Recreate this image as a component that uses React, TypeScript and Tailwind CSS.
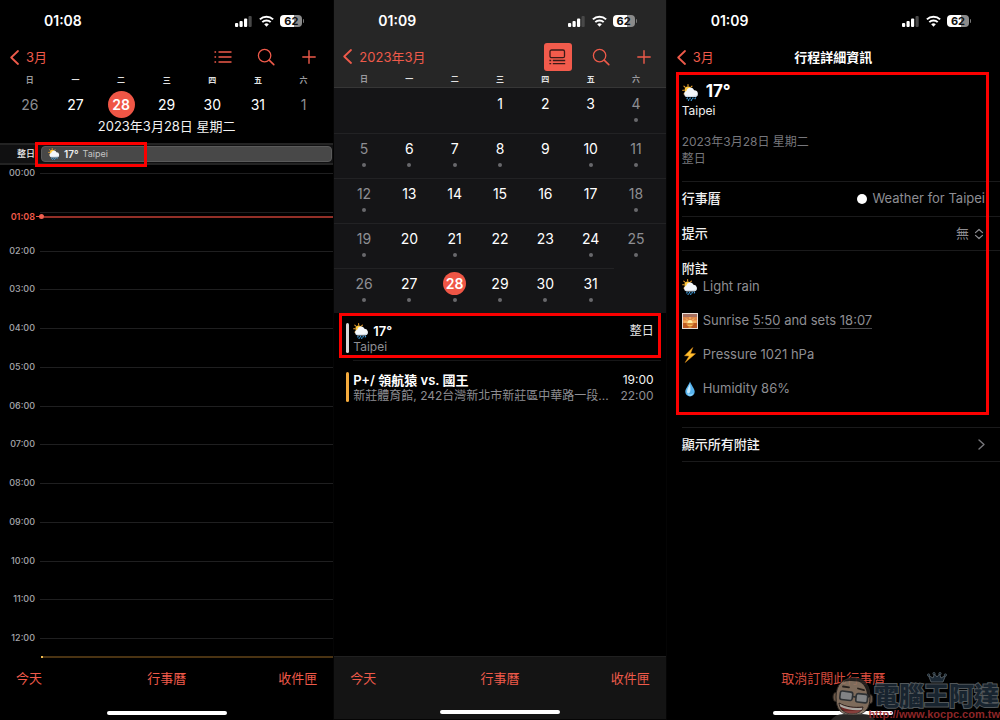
import type { ReactNode } from "react";

const WEEKDAYS = ["日", "一", "二", "三", "四", "五", "六"];
const HOURS = ["00:00", "", "02:00", "03:00", "04:00", "05:00", "06:00", "07:00", "08:00", "09:00", "10:00", "11:00", "12:00"];
const BUSY = [4, 5, 6, 7, 8, 10, 11, 12, 18, 19, 21, 24, 25, 26, 27, 28, 29, 30, 31];

function StatusBar({ time }: { time: string }) {
  return (
    <div className="flex h-[42px] shrink-0 items-center justify-between pr-[29px] pl-11">
      <span className="text-[14px] leading-5 font-semibold text-white">{time}</span>
      <div className="flex items-center gap-[6px]">
        <svg width="18" height="12" viewBox="0 0 18 12" aria-label="訊號">
          <rect x="0" y="8" width="3.2" height="4" rx="1" fill="#fff" />
          <rect x="4.5" y="6" width="3.2" height="6" rx="1" fill="#fff" />
          <rect x="9" y="3.5" width="3.2" height="8.5" rx="1" fill="#fff" />
          <rect x="13.5" y="1" width="3.2" height="11" rx="1" fill="#484848" />
        </svg>
        <svg width="15" height="12" viewBox="0 0 15 12" fill="none" stroke="#fff" strokeWidth="2" aria-label="Wi-Fi">
          <path d="M0.9 4.4a9.4 9.4 0 0 1 13.2 0" />
          <path d="M3.3 7.1a6 6 0 0 1 8.4 0" />
          <path d="M7.5 11.7 5.2 9.3a3.3 3.3 0 0 1 4.6 0z" fill="#fff" stroke="none" />
        </svg>
        <div className="flex items-center gap-px">
          <span className="flex h-3 w-[22px] items-center justify-center rounded-[4px] bg-linear-to-r from-white from-62% to-[#8b8b8b] to-62% text-[11px] leading-3 font-bold text-[#111]">
            62
          </span>
          <span className="h-1 w-px rounded-r bg-[#777]" />
        </div>
      </div>
    </div>
  );
}

function BackLink({ label }: { label: string }) {
  return (
    <a href="#back" className="flex items-center gap-[7px] text-[13px] leading-5 text-[#ee5a4a]">
      <svg width="9" height="15" viewBox="0 0 9 15" fill="none" stroke="currentColor" strokeWidth="1.8" strokeLinecap="round" strokeLinejoin="round">
        <path d="M8 1 1.2 7.5 8 14" />
      </svg>
      {label}
    </a>
  );
}

function IconButton({ label, active, children }: { label: string; active?: boolean; children: ReactNode }) {
  return (
    <button
      aria-label={label}
      className={
        active
          ? "flex size-7 items-center justify-center rounded-[3px] bg-[#f25b4c] text-[#3a1a17]"
          : "flex size-7 items-center justify-center text-[#ee5a4a]"
      }
    >
      {children}
    </button>
  );
}

function SearchAndAdd() {
  return (
    <>
      <IconButton label="搜尋">
        <svg width="18" height="18" viewBox="0 0 18 18" fill="none" stroke="currentColor" strokeWidth="1.3" strokeLinecap="round">
          <circle cx="7.6" cy="7.6" r="6.2" />
          <path d="m12.2 12.2 4.6 4.4" strokeWidth="1.6" />
        </svg>
      </IconButton>
      <IconButton label="加入">
        <svg width="14" height="14" viewBox="0 0 14 14" fill="none" stroke="currentColor" strokeWidth="1.4" strokeLinecap="round">
          <path d="M7 .8v12.4M.8 7h12.4" />
        </svg>
      </IconButton>
    </>
  );
}

function Weekdays() {
  return (
    <div className="grid h-4 grid-cols-7 px-[7px] text-center text-[8px] leading-4 font-bold">
      {WEEKDAYS.map((d, i) => (
        <span key={d} className={i % 6 === 0 ? "text-[#9a9a9e]" : "text-[#e2e2e2]"}>
          {d}
        </span>
      ))}
    </div>
  );
}

function WeatherIcon({ size }: { size: number }) {
  return (
    <svg width={size} height={size} viewBox="0 0 17 17" className="shrink-0" aria-hidden="true">
      <g stroke="#f2a32c" strokeWidth="1.1" strokeLinecap="round">
        <path d="M6 .6v1.5M1.9 2.2l1.1 1M.7 6.2h1.4M10 2.2l-1 1M2 9.8l.8-.7" />
      </g>
      <circle cx="6" cy="6" r="3.4" fill="#ffc83d" />
      <path d="M4.9 13a3 3 0 0 1-.5-5.900A4.100 4.100 0 0 1 12.200 6.200a3.500 3.500 0 0 1 1.300 6.800z" fill="#f4f7fa" />
      <path d="M4.900 13a3 3 0 0 1-2.100-1.400c2.400.600 9.100.600 13-.6a3.500 3.500 0 0 1-2.300 2z" fill="#cfdae5" />
      <g stroke="#3f9ddd" strokeWidth="1.200" strokeLinecap="round">
        <path d="m5.400 14-.4.800M8.200 14l-.4.800M11 14l-.4.800M13.400 14l-.4.800M6.700 15.700l-.3.700M9.500 15.700l-.3.700" />
      </g>
    </svg>
  );
}

function SunriseIcon() {
  return (
    <svg width="16" height="16" viewBox="0 0 16 16" className="shrink-0" aria-hidden="true">
      <rect width="16" height="16" fill="#e9ddd5" />
      <rect x="1" y="1" width="14" height="14" fill="#ee9a52" />
      <rect x="1" y="1" width="14" height="3" fill="#a8705f" />
      <rect x="1" y="4" width="14" height="3" fill="#dd8548" />
      <path d="M8 4v2M4 5.500l1.500 1.500M12 5.500l-1.500 1.500M2 9h3M11 9h3" stroke="#ffd873" strokeWidth=".8" />
      <circle cx="8" cy="9.500" r="2.600" fill="#fff0a6" />
      <rect x="1" y="10" width="14" height="5" fill="#bd5b23" />
      <path d="M4.500 11h7M5.500 12.500h5M6.500 14h3" stroke="#ffc65a" strokeWidth=".9" />
    </svg>
  );
}

function BoltIcon() {
  return (
    <svg width="16" height="16" viewBox="0 0 16 16" className="shrink-0" aria-hidden="true">
      <path d="M10.800.5 2.500 8.800l4.600.2L3.200 15.500l10.300-8.800-4.900-.3z" fill="#ffc02e" stroke="#e58e1c" strokeWidth=".5" />
    </svg>
  );
}

function DropIcon() {
  return (
    <svg width="16" height="16" viewBox="0 0 16 16" className="shrink-0" aria-hidden="true">
      <path d="M8 .4C7 3.800 3.300 7.300 3.300 10.800a4.700 4.700 0 0 0 9.400 0C12.700 7.300 9 3.800 8 .4z" fill="#56b3ee" />
      <path d="M7.900 3C7 5.800 5 8 5 10.600c0 1 .6 1.800 1.400 1.800 2.100 0 2.600-4 1.500-9.400z" fill="#c4ebff" />
      <path d="M5.200 12.500c1.500 1.500 4.500 1.500 6-.5-.4 3-4.700 4-6 .5z" fill="#9edcff" />
    </svg>
  );
}

function TabBar() {
  return (
    <nav className="grid grid-cols-3 px-4 pt-[11px] text-[13px] leading-5 text-[#ee5a4a]">
      <button className="text-left">今天</button>
      <button className="text-center">行事曆</button>
      <button className="text-right">收件匣</button>
    </nav>
  );
}

function HomeIndicator() {
  return <div className="mx-auto mt-auto mb-[5px] h-1 w-[120px] rounded-full bg-white" />;
}

function Annotation() {
  return <div className="pointer-events-none absolute inset-0 border-[3px] border-[#fb0000]" />;
}

function DayView() {
  return (
    <section className="flex min-w-0 flex-col bg-black">
      <StatusBar time="01:08" />
      <header className="flex h-[30px] items-center justify-between px-[10px]">
        <BackLink label="3月" />
        <div className="flex gap-[15px]">
          <IconButton label="列表">
            <svg width="18" height="14" viewBox="0 0 18 14" fill="none" stroke="currentColor" strokeWidth="1.300">
              <path d="M4.500 2h13M4.500 7h13M4.500 12h13M.5 2h1.600M.5 7h1.600M.5 12h1.600" />
            </svg>
          </IconButton>
          <SearchAndAdd />
        </div>
      </header>
      <Weekdays />
      <div className="grid h-8 grid-cols-7 items-center px-[7px] text-center text-[14px] text-white">
        {[26, 27, 28, 29, 30, 31, 1].map((d, i) => (
          <button
            key={d}
            className={
              d === 28
                ? "mx-auto size-[27px] rounded-full bg-[#ef5646] font-semibold"
                : i % 6 === 0
                  ? "text-[#8e8e93]"
                  : "font-normal"
            }
          >
            {d}
          </button>
        ))}
      </div>
      <h1 className="h-[23px] text-center text-[13px] leading-3 text-[#f2f2f2]">2023年3月28日 星期二</h1>
      <div className="flex h-[22px] items-center gap-[6px] border-y-2 border-[#232323] bg-[#101011] pr-px">
        <span className="w-[35px] text-right text-[9px] font-medium text-[#e8e8e8]">整日</span>
        <div className="relative flex h-4 min-w-0 flex-1 items-center gap-1 rounded-[4px] border border-[#5a5a5a] bg-[#484848] pl-[6px]">
          <WeatherIcon size={12} />
          <span className="text-[10px] font-semibold text-[#ededed]">17°</span>
          <span className="text-[9px] text-[#c4c4c4]">Taipei</span>
          <div className="pointer-events-none absolute -top-[5px] -left-[7px] h-[25px] w-[112px] border-[3px] border-[#fb0000]" />
        </div>
      </div>
      <ol className="flex flex-1 flex-col text-[9px] leading-4 text-[#a5a5aa]">
        {HOURS.map((h, i) => (
          <li key={i} className={i === 12 ? "relative flex h-[26px] items-start gap-[5px]" : "relative flex flex-1 items-start gap-[5px]"}>
            <span className="h-4 w-[35px] text-right font-medium">{h}</span>
            <span className="mt-2 h-px flex-1 bg-[#1f1f20]" />
            {i === 1 && (
              <div className="absolute inset-x-0 top-[5px] flex items-center">
                <span className="w-[35px] text-right text-[9px] font-semibold text-[#ee5a4a]">01:08</span>
                <span className="ml-px h-px w-[3px] bg-[#ee5a4a]" />
                <span className="size-[5px] rounded-full bg-[#f0604f]" />
                <span className="h-[2px] flex-1 bg-[#922f27]" />
              </div>
            )}
          </li>
        ))}
      </ol>
      <footer className="flex h-16 flex-col">
        <div className="flex h-px items-center pl-[41px]">
          <span className="size-[2px] bg-[#f4bc4e]" />
          <span className="h-[2px] flex-1 bg-[#4a3312]" />
        </div>
        <TabBar />
        <HomeIndicator />
      </footer>
    </section>
  );
}

function MonthView() {
  const cells = [null, null, null, ...Array.from({ length: 31 }, (_, i) => i + 1)];
  const weeks = [0, 1, 2, 3, 4].map((w) => cells.slice(w * 7, w * 7 + 7));
  return (
    <section className="flex min-w-0 flex-col border border-[#050505] bg-black">
      <div className="-mt-px flex h-[88px] flex-col border-b border-[#363636] bg-[#262626]">
        <StatusBar time="01:09" />
        <header className="flex h-[30px] items-center justify-between pr-2 pl-[9px]">
          <BackLink label="2023年3月" />
          <div className="flex gap-[15px]">
            <IconButton label="顯示活動" active>
              <svg width="17" height="16" viewBox="0 0 17 16" fill="none" stroke="currentColor" strokeWidth="1.300">
                <rect x="1" y="1" width="14.500" height="7.700" rx="1.500" />
                <path d="M3.800 11.500h12.400M3.800 14.700h12.400M.4 11.500h1.800M.4 14.700h1.800" />
              </svg>
            </IconButton>
            <SearchAndAdd />
          </div>
        </header>
        <Weekdays />
      </div>
      <div className="bg-[#151517]">
        {weeks.map((week, w) => (
          <div key={w} className="relative grid h-[45px] grid-cols-7 px-[7px]">
            {w > 0 && <div className={w === 4 ? "absolute top-0 right-[52px] left-0 h-px bg-[#222224]" : "absolute inset-x-0 top-0 h-px bg-[#222224]"} />}
            {week.map((d, i) =>
              d ? (
                <button key={i} className="flex flex-col items-center pt-1 text-[14px] text-white">
                  <span
                    className={
                      d === 28
                        ? "size-[23px] rounded-full bg-[#ef5646] leading-[23px] font-semibold"
                        : i % 6 === 0
                          ? "h-[23px] leading-[23px] text-[#8e8e93]"
                          : "h-[23px] leading-[23px] font-normal"
                    }
                  >
                    {d}
                  </span>
                  {BUSY.includes(d) && <span className="mt-[3px] size-1 rounded-full bg-[#68686c]" />}
                </button>
              ) : (
                <span key={i} />
              ),
            )}
          </div>
        ))}
      </div>
      <ul className="px-[5px]">
        <li className="relative flex h-[45px] gap-1 px-[7px] pt-[10px]">
          <span className="h-[30px] w-[3px] rounded-full bg-[#d9d9d9]" />
          <div className="min-w-0 flex-1">
            <div className="flex h-4 items-center gap-1 text-[13px] leading-4 font-semibold text-white">
              <WeatherIcon size={16} />
              17°
            </div>
            <div className="text-[12px] leading-4 text-[#8e8e93]">Taipei</div>
          </div>
          <span className="text-[12px] leading-4 text-[#e8e8e8]">整日</span>
          <Annotation />
        </li>
        <li className="mt-[2px] ml-[14px] h-px bg-[#161617]" />
        <li className="flex gap-1 px-[7px] pt-[11px]">
          <span className="h-[30px] w-[3px] rounded-full bg-[#f5ab3d]" />
          <div className="min-w-0 flex-1">
            <div className="text-[13px] leading-4 font-semibold text-white">P+/ 領航猿 vs. 國王</div>
            <div className="text-[12px] leading-4 whitespace-nowrap text-[#8e8e93]">新莊體育館, 242台灣新北市新莊區中華路一段...</div>
          </div>
          <div className="text-right text-[12px] leading-4">
            <div className="text-[#f2f2f2]">19:00</div>
            <div className="text-[#8e8e93]">22:00</div>
          </div>
        </li>
      </ul>
      <footer className="mt-auto flex h-[63px] flex-col border-t border-[#202020] bg-[#141414]">
        <TabBar />
        <HomeIndicator />
      </footer>
    </section>
  );
}

function Note({ icon, children }: { icon: ReactNode; children: ReactNode }) {
  return (
    <li className="flex h-[18px] items-center gap-[5px]">
      {icon}
      <span>{children}</span>
    </li>
  );
}

function Watermark() {
  return (
    <div className="pointer-events-none absolute right-0 bottom-0 flex items-end opacity-90">
      <svg width="46" height="44" viewBox="0 0 46 44" className="-mr-[9px]" aria-hidden="true">
        <path d="M0 44c3-4 7-6 12-6h20c6 0 10 3 12 6z" fill="#2c2b2a" />
        <ellipse cx="5" cy="21" rx="3" ry="4.500" fill="#75604e" stroke="#2b2622" />
        <ellipse cx="39" cy="23" rx="2.800" ry="4.500" fill="#75604e" stroke="#2b2622" />
        <path d="M5 21C5 8 12 2 23 2s16 8 16 19c0 12-5 18-17 18S5 34 5 21z" fill="#8c7765" stroke="#2b2622" />
        <path d="M12 6c3-3 7-4.500 12-4.500C34 2 39 9 39 21l-2.500 1C36 13 33 7 27 5.500 21 4.500 16 5 12 6z" fill="#24211f" />
        <g fill="#8f9294" stroke="#33373a" strokeWidth="1.600">
          <rect x="9" y="15.500" width="12.500" height="8.500" rx="2" transform="rotate(7 15 20)" />
          <rect x="25" y="18" width="11.500" height="8.500" rx="2" transform="rotate(6 31 22)" />
        </g>
        <path d="m21.500 20.500 3.500.6" stroke="#33373a" strokeWidth="1.600" />
        <path d="m12 10.500 6 .8M27 12.500l6 1.700" stroke="#2b2420" strokeWidth="1.800" strokeLinecap="round" />
        <path d="M8 27c7 4 15 5 24 4-1 5-6 7-11 7-7 0-12-4-13-11z" fill="#7a2b28" stroke="#2b2622" />
        <path d="M8.500 27.800c7 3.800 14.500 4.700 23 3.900l-1 2.300c-8 .8-15-.4-21-3.200z" fill="#bdb9b3" />
      </svg>
      <div className="flex flex-col items-end">
        <svg width="20" height="11" viewBox="0 0 20 11" className="mr-[53px]" aria-hidden="true">
          <path d="M4 10 1.500 3.500 6 6l1.500-4L10 5l2.500-3L14 6l4.500-2.500L16 10z" fill="#1d2c39" stroke="#69757c" strokeWidth=".8" />
          <g fill="#1d2c39" stroke="#69757c" strokeWidth=".6">
            <circle cx="1.600" cy="3" r="1.200" />
            <circle cx="7" cy="1.600" r="1.200" />
            <circle cx="13" cy="1.600" r="1.200" />
            <circle cx="18.400" cy="3" r="1.200" />
          </g>
        </svg>
        <span className="mr-px text-[25px] leading-[26px] font-black text-[#1b2935] [-webkit-text-stroke:2px_#5c6265] [paint-order:stroke]">電腦王阿達</span>
        <span className="font-['Liberation_Sans',sans-serif] text-[11px] leading-[11px] font-bold text-[#9c2b2d]">http://www.kocpc.com.tw</span>
      </div>
    </div>
  );
}

function EventDetail() {
  return (
    <section className="relative flex min-w-0 flex-col bg-black">
      <StatusBar time="01:09" />
      <header className="grid h-[30px] grid-cols-[1fr_auto_1fr] items-center px-[10px]">
        <BackLink label="3月" />
        <h2 className="text-[13px] leading-5 font-semibold text-white">行程詳細資訊</h2>
      </header>
      <div className="relative flex h-[343px] flex-col pl-[15px] text-[13px]">
        <h3 className="mt-2 flex h-6 items-center gap-[7px] text-[17px] font-bold text-white">
          <WeatherIcon size={17} />
          17°
        </h3>
        <p className="text-[12px] leading-[14px] text-[#f0f0f0]">Taipei</p>
        <div className="mt-[15px] h-12 text-[12px] leading-[17px] text-[#77777c]">
          <p>2023年3月28日 星期二</p>
          <p>整日</p>
        </div>
        <div className="flex h-[35px] items-center justify-between border-t border-[#1a1a1b] pr-[15px]">
          <span className="font-medium text-[#f2f2f2]">行事曆</span>
          <span className="flex items-center gap-[5px] text-[#8e8e93]">
            <span className="size-[10px] rounded-full bg-white" />
            Weather for Taipei
          </span>
        </div>
        <div className="flex h-[35px] items-center justify-between border-y border-[#1a1a1b] pr-4">
          <label htmlFor="alert" className="font-medium text-[#f2f2f2]">
            提示
          </label>
          <span className="flex items-center gap-1 text-[#8e8e93]">
            <select id="alert" className="appearance-none bg-transparent">
              <option>無</option>
            </select>
            <svg width="10" height="12" viewBox="0 0 10 12" fill="none" stroke="currentColor" strokeWidth="1.200" strokeLinecap="round" strokeLinejoin="round">
              <path d="M1.500 4.600 5 1.500l3.500 3.100M1.500 7.400 5 10.500l3.500-3.100" />
            </svg>
          </span>
        </div>
        <h4 className="mt-[7px] h-5 leading-5 font-medium text-[#f2f2f2]">附註</h4>
        <ul className="flex flex-col gap-4 text-[#8e8e93]">
          <Note icon={<WeatherIcon size={16} />}>Light rain</Note>
          <Note icon={<SunriseIcon />}>
            Sunrise <a href="#sunrise" className="border-b border-[#48484c]">5:50</a> and sets{" "}
            <a href="#sunset" className="border-b border-[#48484c]">18:07</a>
          </Note>
          <Note icon={<BoltIcon />}>Pressure 1021 hPa</Note>
          <Note icon={<DropIcon />}>Humidity 86%</Note>
        </ul>
        <div className="pointer-events-none absolute inset-y-0 right-[11px] left-[9px] border-[3px] border-[#fb0000]" />
      </div>
      <a href="#notes" className="mt-3 ml-[15px] flex h-[35px] items-center justify-between border-y border-[#1a1a1b] pr-[15px] text-[13px] font-medium text-[#f2f2f2]">
        顯示所有附註
        <svg width="7" height="11" viewBox="0 0 7 11" fill="none" stroke="#77777b" strokeWidth="1.400" strokeLinecap="round" strokeLinejoin="round">
          <path d="m1 1 5 4.500L1 10" />
        </svg>
      </a>
      <footer className="mt-auto flex h-[63px] flex-col">
        <button className="mt-[11px] text-center text-[13px] leading-5 text-[#d94c3e]">取消訂閱此行事曆</button>
        <HomeIndicator />
      </footer>
      <Watermark />
    </section>
  );
}

export default function App() {
  return (
    <main className="grid min-h-screen grid-cols-3 bg-black font-[Inter,'Noto_Sans_CJK_TC',sans-serif]">
      <DayView />
      <MonthView />
      <EventDetail />
    </main>
  );
}
